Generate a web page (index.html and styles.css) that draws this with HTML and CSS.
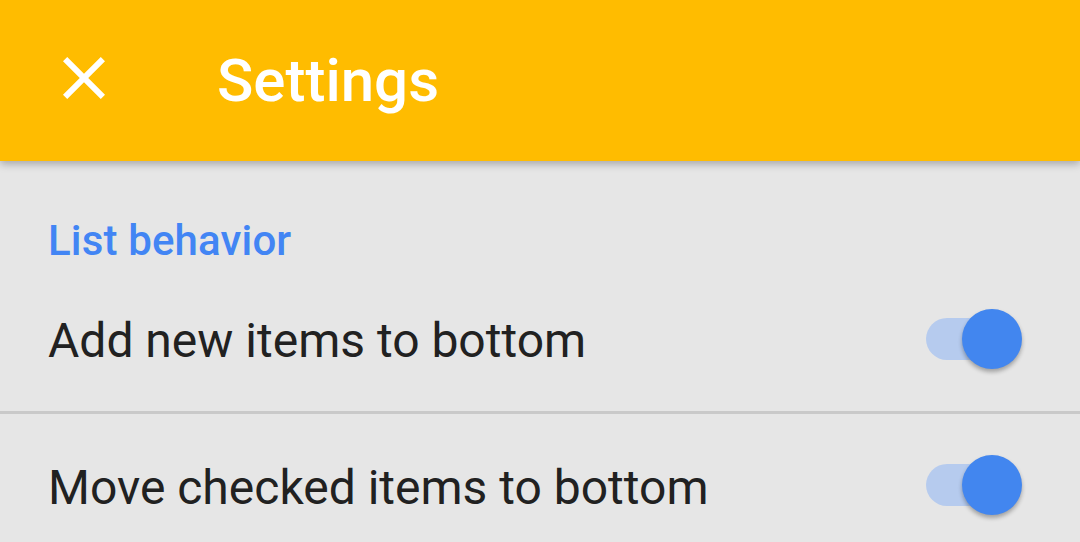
FILE: index.html
```html
<!DOCTYPE html>
<html>
<head>
<meta charset="utf-8">
<link rel="stylesheet" href="styles.css">
</head>
<body>
<header class="appbar">
  <svg class="close" viewBox="0 0 24 24" width="72" height="72"><path d="M19 6.41L17.59 5 12 10.59 6.41 5 5 6.41 10.59 12 5 17.59 6.41 19 12 13.41 17.59 19 19 17.59 13.41 12z" fill="#fff"/></svg>
  <h1 class="title">Settings</h1>
</header>
<main class="content">
  <div class="category">List behavior</div>
  <div class="row">
    <span class="label">Add new items to bottom</span>
    <span class="switch"><span class="track"></span><span class="thumb"></span></span>
  </div>
  <div class="divider"></div>
  <div class="row row-last">
    <span class="label">Move checked items to bottom</span>
    <span class="switch"><span class="track"></span><span class="thumb"></span></span>
  </div>
</main>
</body>
</html>
```
FILE: styles.css
```css
html, body {
  margin: 0;
  padding: 0;
  height: 100%;
  overflow: hidden;
}
body {
  background: #e6e6e6;
  font-family: Roboto, "Noto Sans", sans-serif;
}
.appbar {
  position: relative;
  z-index: 2;
  height: 161px;
  background: #ffbc00;
  display: flex;
  align-items: center;
  padding-left: 48px;
  box-shadow: 0 3px 8px rgba(0, 0, 0, 0.28);
}
.close {
  display: block;
  margin-bottom: 5px;
  flex: none;
}
.title {
  margin: 0 0 0 97px;
  font-size: 60px;
  font-weight: 500;
  line-height: 60px;
  color: #fff;
}
.content {
  display: flex;
  flex-direction: column;
}
.category {
  padding: 54px 48px 0;
  line-height: 51px;
  font-size: 42px;
  font-weight: 500;
  color: #4285f4;
  letter-spacing: 0.15px;
}
.row {
  height: 145px;
  flex: none;
  display: flex;
  align-items: center;
  justify-content: space-between;
  padding: 0 58px 0 48px;
}
.row-last {
  height: 142px;
}
.label {
  font-size: 48px;
  color: #212121;
  margin-top: 4px;
}
.divider {
  height: 3px;
  background: #c9c9c9;
  flex: none;
}
.switch {
  position: relative;
  width: 96px;
  height: 60px;
  flex: none;
}
.track {
  position: absolute;
  left: 0;
  top: 9px;
  width: 82px;
  height: 42px;
  border-radius: 21px;
  background: #b6cbee;
}
.thumb {
  position: absolute;
  right: 0;
  top: 0;
  width: 60px;
  height: 60px;
  border-radius: 50%;
  background: #4286ef;
  box-shadow: 0 3px 4px rgba(0, 0, 0, 0.3);
}
```
